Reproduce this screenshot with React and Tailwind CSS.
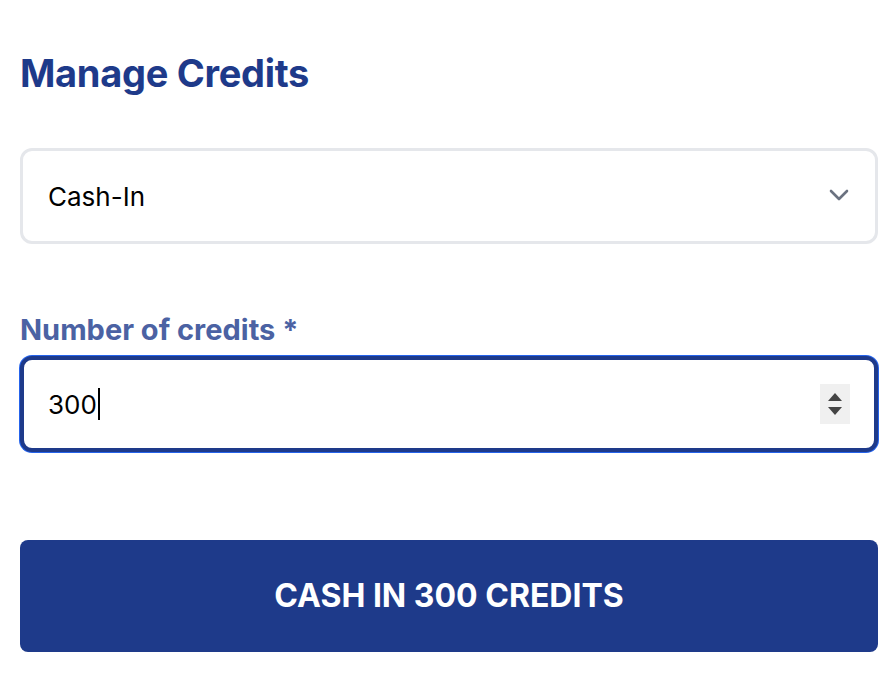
import { useState } from 'react';

const ManageCredits = () => {
  const [type, setType] = useState('Cash-In');
  const [credits] = useState(300);

  return (
    <div className="min-h-[676px] w-[896px] bg-white pl-5 pr-[18px] pt-[48px] font-['Inter',sans-serif]">
      <h1 className="text-[38px] font-bold leading-[50px] tracking-[-0.3px] text-[#1e3a8a]">Manage Credits</h1>

      <div className="relative mt-[50px]">
        <select
          value={type}
          onChange={(event) => setType(event.target.value)}
          className="h-[96px] w-full appearance-none rounded-[12px] border-[3px] border-[#e5e7eb] bg-white pl-[25px] text-[26px] text-black outline-none"
        >
          <option value="Cash-In">Cash-In</option>
          <option value="Cash-Out">Cash-Out</option>
        </select>
        <svg
          className="pointer-events-none absolute right-[28px] top-[38px]"
          width="22"
          height="16"
          viewBox="0 0 22 16"
          fill="none"
          stroke="#6b7280"
          strokeWidth="2.6"
          strokeLinecap="round"
          strokeLinejoin="round"
        >
          <path d="M3 5l8 8 8-8" />
        </svg>
      </div>

      <label className="mt-[69px] block text-[29px] font-bold leading-[34px] text-[#4b62a3]">
        Number of credits *
      </label>
      <div className="relative mt-[9px] flex h-[96px] items-center rounded-[12px] border-[4px] border-[#1e3a8a] bg-white pl-[24px] shadow-[0_0_0_1px_#2563eb] text-[26px] text-black">
        <span>{credits}</span>
        <span className="ml-[1px] h-[32px] w-[2px] bg-black" />
        <div className="absolute right-[24px] top-[24px] flex h-[40px] w-[30px] flex-col items-center justify-center gap-[6px] bg-[#f0f0f0]">
          <span className="h-0 w-0 border-x-[7px] border-b-[8px] border-x-transparent border-b-[#444]" />
          <span className="h-0 w-0 border-x-[7px] border-t-[8px] border-x-transparent border-t-[#444]" />
        </div>
      </div>

      <button
        type="button"
        className="mt-[88px] h-[112px] w-full rounded-[8px] bg-[#1e3a8a] text-[32px] font-bold text-white"
      >
        CASH IN {credits} CREDITS
      </button>
    </div>
  );
};

export default function App() {
  return <ManageCredits />;
}
